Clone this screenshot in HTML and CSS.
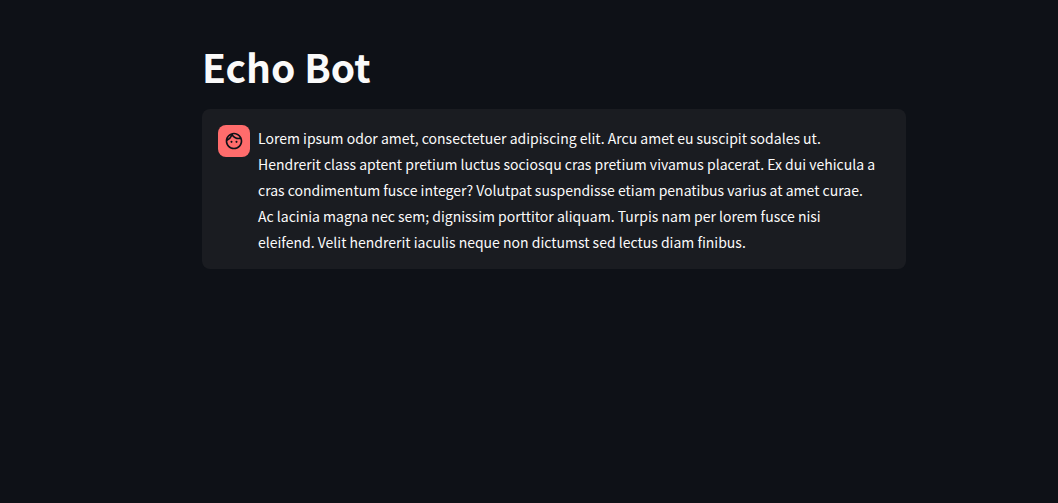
FILE: index.html
```
<!DOCTYPE html>
<html lang="en">
<head>
<meta charset="utf-8">
<meta name="viewport" content="width=device-width, initial-scale=1">
<title>Echo Bot</title>
<link rel="stylesheet" href="styles.css">
</head>
<body>
<main class="page">
  <h1 class="title">Echo Bot</h1>
  <article class="message">
    <div class="avatar">
      <svg class="avatar-icon" viewBox="0 0 24 24" aria-hidden="true"><path d="M10.25 13a1.25 1.25 0 1 1-2.5 0 1.25 1.25 0 0 1 2.500 0zM15 11.750a1.250 1.250 0 1 0 0 2.500 1.250 1.250 0 0 0 0-2.500zM22 12c0 5.520-4.480 10-10 10S2 17.520 2 12 6.480 2 12 2s10 4.480 10 10zm-2 0c0-.780-.120-1.530-.330-2.240-.700.150-1.420.240-2.170.240a10 10 0 0 1-7.760-3.690A10.016 10.016 0 0 1 4 11.860c.010.040 0 .090 0 .140 0 4.410 3.590 8 8 8s8-3.590 8-8zM10.660 4.120C12.060 6.440 14.600 8 17.500 8c.460 0 .910-.050 1.340-.120C17.440 5.560 14.900 4 12 4c-.460 0-.910.050-1.340.120zM4.420 9.470a8.046 8.046 0 0 0 3.660-4.440 8.046 8.046 0 0 0-3.660 4.440z"/></svg>
    </div>
    <p class="text">Lorem ipsum odor amet, consectetuer adipiscing elit. Arcu amet eu suscipit sodales ut.<br>Hendrerit class aptent pretium luctus sociosqu cras pretium vivamus placerat. Ex dui vehicula a<br>cras condimentum fusce integer? Volutpat suspendisse etiam penatibus varius at amet curae.<br>Ac lacinia magna nec sem; dignissim porttitor aliquam. Turpis nam per lorem fusce nisi<br>eleifend. Velit hendrerit iaculis neque non dictumst sed lectus diam finibus.</p>
  </article>
</main>
</body>
</html>
```
FILE: styles.css
```
* { box-sizing: border-box; }
body {
  margin: 0;
  min-height: 100vh;
  background: #0e1117;
  color: #fafafa;
  font-family: "Noto Sans CJK SC", "Noto Sans", sans-serif;
}
.page {
  max-width: 736px;
  margin-left: calc(50% - 343px);
  padding: 40px 16px;
}
.title {
  margin: 0;
  padding: 0 0 16px;
  font-size: 39px;
  line-height: 53px;
  font-weight: 700;
}
.message {
  display: flex;
  align-items: flex-start;
  gap: 8px;
  max-width: 704px;
  padding: 16px 16px 14px;
  border-radius: 8px;
  background: #1a1c21;
}
.avatar {
  display: flex;
  flex: none;
  align-items: center;
  justify-content: center;
  width: 32px;
  height: 32px;
  border-radius: 8px;
  background: #ff6c6c;
}
.avatar-icon {
  width: 20px;
  height: 20px;
  fill: #0e1117;
}
.text {
  flex: 1;
  margin: 0;
  font-size: 14px;
  line-height: 26px;
}
```
